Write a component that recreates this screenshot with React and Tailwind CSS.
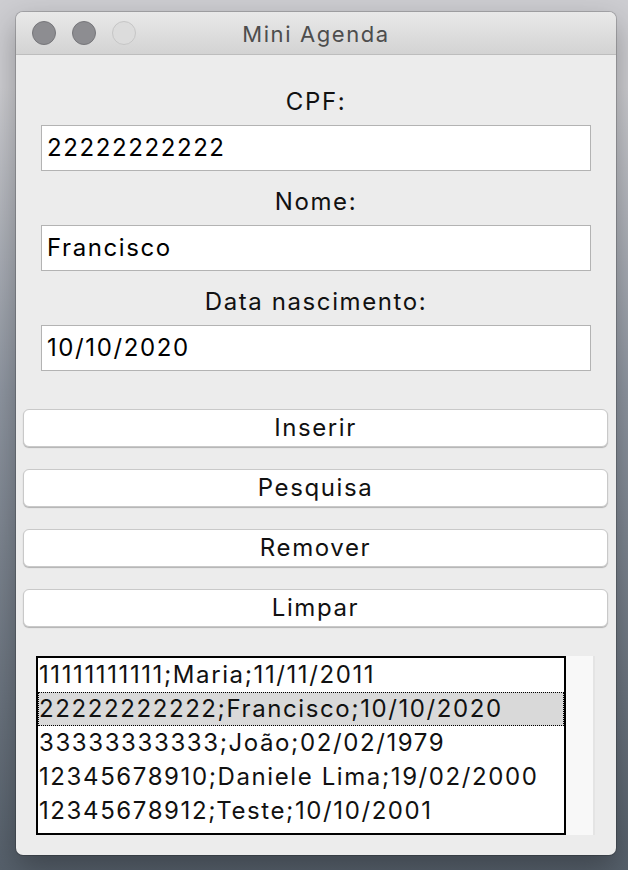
import React from "react";

const fields = [
  { label: "CPF:", value: "22222222222" },
  { label: "Nome:", value: "Francisco" },
  { label: "Data nascimento:", value: "10/10/2020" },
];

const buttons = ["Inserir", "Pesquisa", "Remover", "Limpar"];

const rows = [
  "11111111111;Maria;11/11/2011",
  "22222222222;Francisco;10/10/2020",
  "33333333333;João;02/02/1979",
  "12345678910;Daniele Lima;19/02/2000",
  "12345678912;Teste;10/10/2001",
];

const App = () => {
  const selected = 1;

  return (
    <div className="w-[628px] h-[870px] pt-[12px] pl-[16px] bg-linear-to-b from-[#cdcdd1] from-10% via-[#8f96a1] via-45% to-[#56606b] font-['Inter',sans-serif] text-[#111]">
      {/* window */}
      <div className="w-[600px] h-[843px] rounded-[7px] bg-[#ececec] overflow-hidden flex flex-col shadow-[0_0_0_1px_rgba(0,0,0,0.18),0_12px_30px_rgba(0,0,0,0.3)]">
        {/* title bar */}
        <div className="h-[43px] shrink-0 grid grid-cols-[1fr_auto_1fr] items-center bg-linear-to-b from-[#e9e9e9] to-[#d3d3d3] border-b border-[#bdbdbd]">
          <div className="flex gap-[16px] pl-[16px]">
            <span className="w-[24px] h-[24px] rounded-full bg-[#8d8d91] border border-[#76767a]" />
            <span className="w-[24px] h-[24px] rounded-full bg-[#8d8d91] border border-[#76767a]" />
            <span className="w-[24px] h-[24px] rounded-full bg-[#dcdcdc] border border-[#c6c6c6]" />
          </div>
          <div className="text-[22px] tracking-[1.6px] text-[#4d4d4d] pt-[3px]">Mini Agenda</div>
          <div />
        </div>

        {/* form */}
        <div className="flex flex-col pt-[32px]">
          {fields.map((f, i) => (
            <div key={f.label} className={i > 0 ? "mt-[16px]" : ""}>
              <div className="h-[30px] leading-[30px] text-center text-[24px] tracking-[1.6px]">{f.label}</div>
              <div className="mt-[8px] mx-[25px] h-[46px] bg-white border border-[#b3b3b3] flex items-center pl-[5px] text-[24px] tracking-[1.6px] text-black">
                {f.value}
              </div>
            </div>
          ))}

          {/* buttons */}
          <div className="flex flex-col gap-[21px] mt-[38px] ml-[7px] mr-[8px]">
            {buttons.map((b) => (
              <button
                key={b}
                className="h-[38px] mb-[1px] bg-white rounded-[6px] border border-[#c9c9c9] shadow-[0_1px_1px_rgba(0,0,0,0.25)] text-[24px] tracking-[1.6px] text-[#111] flex items-center justify-center"
              >
                {b}
              </button>
            ))}
          </div>

          {/* listbox */}
          <div className="mt-[28px] ml-[20px] flex h-[179px]">
            <div className="w-[530px] border-2 border-black bg-white flex flex-col">
              {rows.map((r, i) => (
                <div
                  key={r}
                  className={
                    i === selected
                      ? "h-[34px] leading-[32px] text-[24px] tracking-[1.6px] whitespace-nowrap bg-[#d9d9d9] border border-dotted border-black"
                      : "h-[34px] leading-[34px] text-[24px] tracking-[1.6px] whitespace-nowrap px-[1px]"
                  }
                >
                  {r}
                </div>
              ))}
            </div>
            <div className="w-[29px] bg-[#f8f8f8] border-r-2 border-[#e4e4e4]" />
          </div>
        </div>
      </div>
    </div>
  );
};

export default App;
